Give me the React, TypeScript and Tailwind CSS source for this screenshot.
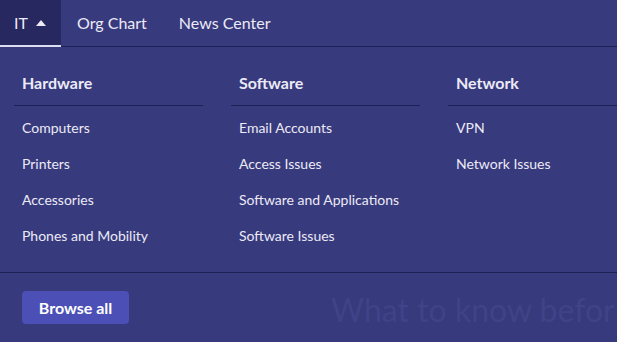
const columns = [
  { title: 'Hardware', items: ['Computers', 'Printers', 'Accessories', 'Phones and Mobility'] },
  { title: 'Software', items: ['Email Accounts', 'Access Issues', 'Software and Applications', 'Software Issues'] },
  { title: 'Network', items: ['VPN', 'Network Issues'] },
]

export default function App() {
  return (
    <div className="relative w-[617px] h-[342px] overflow-hidden bg-[#373a7d] text-[#eceaf6] font-['Lato','Open_Sans',sans-serif]">
      {/* faded page content behind the menu */}
      <div className="absolute left-[331px] top-[286px] text-[32px] text-[#3f4388] whitespace-nowrap">
        What to know befor
      </div>

      {/* Top nav */}
      <nav className="relative flex h-[47px] border-b border-[#1f2156] text-[16px]">
        <button className="flex items-center gap-[8px] w-[61px] pl-[14px] bg-[#26285f] border-b-2 border-[#dcdcf0] -mb-px">
          <span>IT</span>
          <svg width="10" height="6" viewBox="0 0 10 6">
            <path d="M0 6 L5 0 L10 6 Z" fill="currentColor" />
          </svg>
        </button>
        <a className="flex items-center px-[16px]">Org Chart</a>
        <a className="flex items-center px-[16px]">News Center</a>
      </nav>

      {/* Mega menu */}
      <div className="relative flex gap-[28px] pl-[14px] pt-[24px] pb-[11px]">
        {columns.map((col) => (
          <div key={col.title} className="w-[189px] shrink-0">
            <h3 className="pl-[8px] pb-[10px] text-[16px] font-bold border-b border-[#1f2156] leading-[24px]">
              {col.title}
            </h3>
            <ul className="pl-[8px] pt-[11px] flex flex-col">
              {col.items.map((item) => (
                <li key={item} className="h-[36px] leading-[22px] text-[14px]">
                  {item}
                </li>
              ))}
            </ul>
          </div>
        ))}
      </div>

      <div className="relative border-t border-[#1f2156] pl-[22px] pt-[18px]">
        <button className="h-[33px] w-[107px] rounded-[4px] bg-[#4b4fb6] text-[16px] font-bold text-white">
          Browse all
        </button>
      </div>
    </div>
  )
}
